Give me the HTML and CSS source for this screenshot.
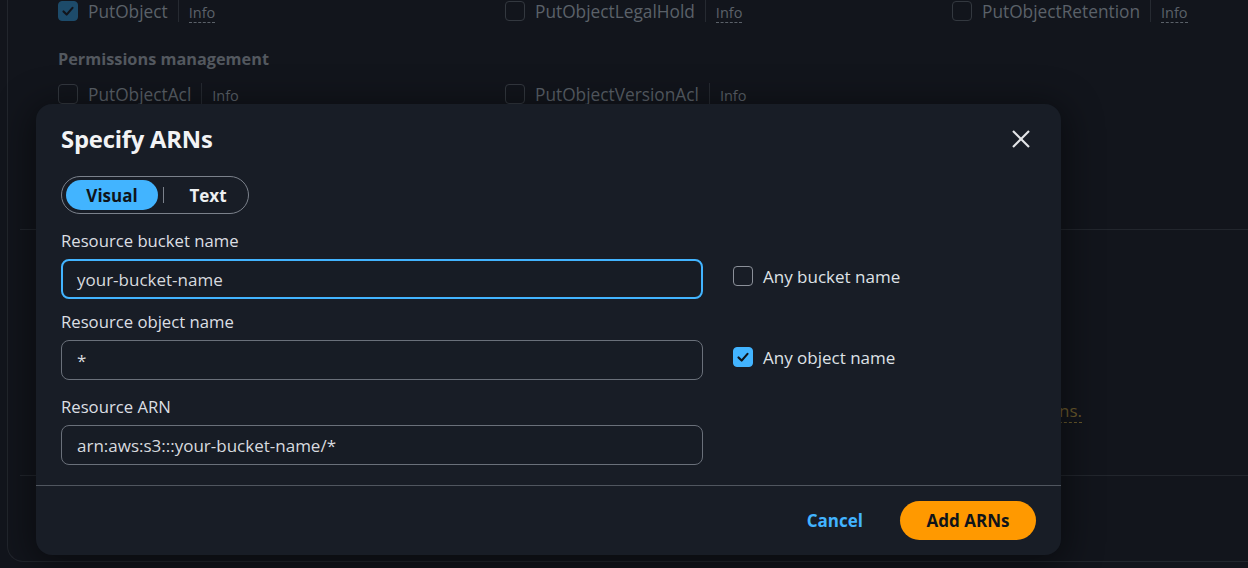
FILE: index.html
```html
<!DOCTYPE html>
<html lang="en">
<head>
<meta charset="utf-8">
<title>Specify ARNs</title>
<link rel="stylesheet" href="styles.css">
</head>
<body>
<div class="panel">
  <div class="actions">
    <div class="grid3">
      <div class="act"><span class="cb cb-on"><svg viewBox="0 0 20 20"><polyline points="5,10.5 8.5,14 15,6.5" /></svg></span><span class="act-name">PutObject</span><span class="sep"></span><span class="info">Info</span></div>
      <div class="act"><span class="cb"></span><span class="act-name">PutObjectLegalHold</span><span class="sep"></span><span class="info">Info</span></div>
      <div class="act"><span class="cb"></span><span class="act-name">PutObjectRetention</span><span class="sep"></span><span class="info">Info</span></div>
    </div>
    <div class="group-title">Permissions management</div>
    <div class="grid3">
      <div class="act"><span class="cb"></span><span class="act-name">PutObjectAcl</span><span class="sep"></span><span class="info">Info</span></div>
      <div class="act"><span class="cb"></span><span class="act-name">PutObjectVersionAcl</span><span class="sep"></span><span class="info">Info</span></div>
    </div>
  </div>
  <div class="bg-rule"></div>
  <div class="bg-mid">
    <p class="bg-note">You can specify resources and conditions. <span class="bg-link">Learn more about conditions.</span></p>
  </div>
  <div class="bg-rule"></div>
</div>

<div class="modal" role="dialog" aria-labelledby="mtitle">
  <div class="modal-head">
    <h2 id="mtitle" class="modal-title">Specify ARNs</h2>
    <button class="close" aria-label="Close"><svg viewBox="0 0 20 20"><line x1="2" y1="2" x2="18" y2="18"/><line x1="18" y1="2" x2="2" y2="18"/></svg></button>
  </div>
  <div class="modal-body">
    <div class="seg">
      <span class="seg-btn seg-on">Visual</span>
      <span class="seg-div"></span>
      <span class="seg-btn seg-off">Text</span>
    </div>
    <div class="form">
      <div class="row row1">
        <div class="field">
          <label class="label">Resource bucket name</label>
          <div class="input input-focus">your-bucket-name</div>
        </div>
        <label class="check"><span class="box"></span>Any bucket name</label>
      </div>
      <div class="row row2">
        <div class="field">
          <label class="label">Resource object name</label>
          <div class="input">*</div>
        </div>
        <label class="check"><span class="box box-on"><svg viewBox="0 0 20 20"><polyline points="5,10.5 8.5,14 15,6.5" /></svg></span>Any object name</label>
      </div>
      <div class="row row3">
        <div class="field">
          <label class="label">Resource ARN</label>
          <div class="input">arn:aws:s3:::your-bucket-name/*</div>
        </div>
      </div>
    </div>
  </div>
  <div class="modal-foot">
    <button class="btn-link">Cancel</button>
    <button class="btn-primary">Add ARNs</button>
  </div>
</div>
</body>
</html>
```
FILE: styles.css
```css
* { box-sizing: border-box; }
html, body { margin: 0; padding: 0; }
body {
  width: 1248px;
  height: 568px;
  overflow: hidden;
  background: #12151c;
  font-family: "Open Sans", "Noto Sans", sans-serif;
  font-size: 17px;
  color: #5e646d;
  position: relative;
}

/* dimmed background page */
.panel {
  margin-left: 7px;
  height: 562px;
  border-left: 1px solid #22262d;
  border-bottom: 1px solid #22262d;
  border-bottom-left-radius: 16px;
}
.actions { padding-left: 50px; height: 229px; }
.grid3 { display: grid; grid-template-columns: 447px 447px 300px; }
.act { display: flex; align-items: center; height: 22px; }
.cb {
  width: 20px; height: 20px; border: 1.5px solid #33383f; border-radius: 4px;
  margin-right: 10px; display: inline-flex; flex: none;
}
.cb-on { background: #1d4b6a; border-color: #1d4b6a; }
.cb svg, .box svg { width: 100%; height: 100%; fill: none; stroke: #12151c; stroke-width: 2.4; stroke-linecap: round; stroke-linejoin: round; }
.act-name { font-size: 17.3px; color: #5b6169; }
.sep { width: 1px; height: 22px; background: #262a31; margin: 0 10px; }
.info { font-size: 14.5px; color: #5b6169; border-bottom: 1px dashed #5b6169; line-height: 18px; margin-top: 4px; }
.group-title { font-weight: 700; font-size: 16.3px; color: #53585f; margin: 26px 0 13px; line-height: 22px; }
.bg-rule { height: 1px; background: #22262d; margin-left: 12px; }
.bg-mid { height: 245px; display: flex; justify-content: flex-end; padding-right: 166px; }
.bg-note { margin: 169px 0 0; color: #4e535a; white-space: nowrap; }
.bg-link { color: #6a5a2c; border-bottom: 1px dashed #6a5a2c; }

/* modal */
.modal {
  position: absolute;
  left: 36px; top: 104px;
  width: 1025px; height: 451px;
  background: #181d26;
  border-radius: 16px;
  box-shadow: 0 6px 36px 6px rgba(0, 0, 0, 0.45);
  display: flex; flex-direction: column;
  color: #d5d8dd;
}
.modal-head {
  display: flex; align-items: center; justify-content: space-between;
  padding: 0 30px 0 25px;
  height: 70px;
}
.modal-title { margin: 0; font-size: 23.8px; font-weight: 700; color: #f2f3f5; letter-spacing: -0.2px; }
.close { background: none; border: 0; padding: 0; width: 20px; height: 20px; display: block; cursor: pointer; }
.close svg { width: 20px; height: 20px; stroke: #e3e5e8; stroke-width: 2.2; }

.modal-body { padding: 2px 25px 0 25px; flex: 1; }
.seg {
  display: inline-flex; align-items: center;
  width: 188px; height: 38px;
  border: 1px solid #7b818b; border-radius: 20px;
  padding: 0 4px;
}
.seg-btn { font-weight: 700; font-size: 17px; color: #eef0f2; display: flex; align-items: center; justify-content: center; height: 30px; }
.seg-on { width: 92px; background: #42b4ff; color: #0f141a; border-radius: 16px; }
.seg-div { width: 1px; height: 16px; background: #7b818b; margin-left: 5px; }
.seg-off { flex: 1; padding-left: 8px; }

.form { margin-top: 16px; }
.row { display: flex; align-items: flex-end; }
.row2 { margin-top: 12px; }
.row3 { margin-top: 16px; }
.field { width: 642px; flex: none; }
.label { display: block; font-size: 16.7px; line-height: 22px; color: #dcdfe3; margin-bottom: 7px; }
.input {
  height: 40px; border: 1px solid #6a707a; border-radius: 8px;
  padding: 0 15px; display: flex; align-items: center;
  font-size: 17px; color: #d7dadf; background: #171c25;
}
.input-focus { border: 2px solid #42b4ff; padding: 0 14px; }
.check {
  display: flex; align-items: center; margin-left: 30px; height: 40px;
  font-size: 17px; color: #dfe2e6; margin-bottom: 3px;
}
.box {
  width: 20px; height: 20px; border: 1.5px solid #8b9099; border-radius: 4px;
  margin-right: 10px; display: inline-flex; flex: none;
}
.box-on { background: #42b4ff; border-color: #42b4ff; }
.box-on svg { stroke: #0f141a; }

.modal-foot {
  border-top: 1px solid #50565f;
  height: 70px;
  display: flex; align-items: center; justify-content: flex-end;
  padding: 0 25px 0 0;
}
.btn-link {
  background: none; border: 0; font-family: inherit; font-weight: 700; font-size: 17px;
  color: #42b4ff; padding: 0; margin-right: 37px; cursor: pointer;
}
.btn-primary {
  background: #ff9900; border: 0; border-radius: 20px; height: 39px; width: 136px;
  font-family: inherit; font-weight: 700; font-size: 17px; color: #0f141a; cursor: pointer;
}
```
